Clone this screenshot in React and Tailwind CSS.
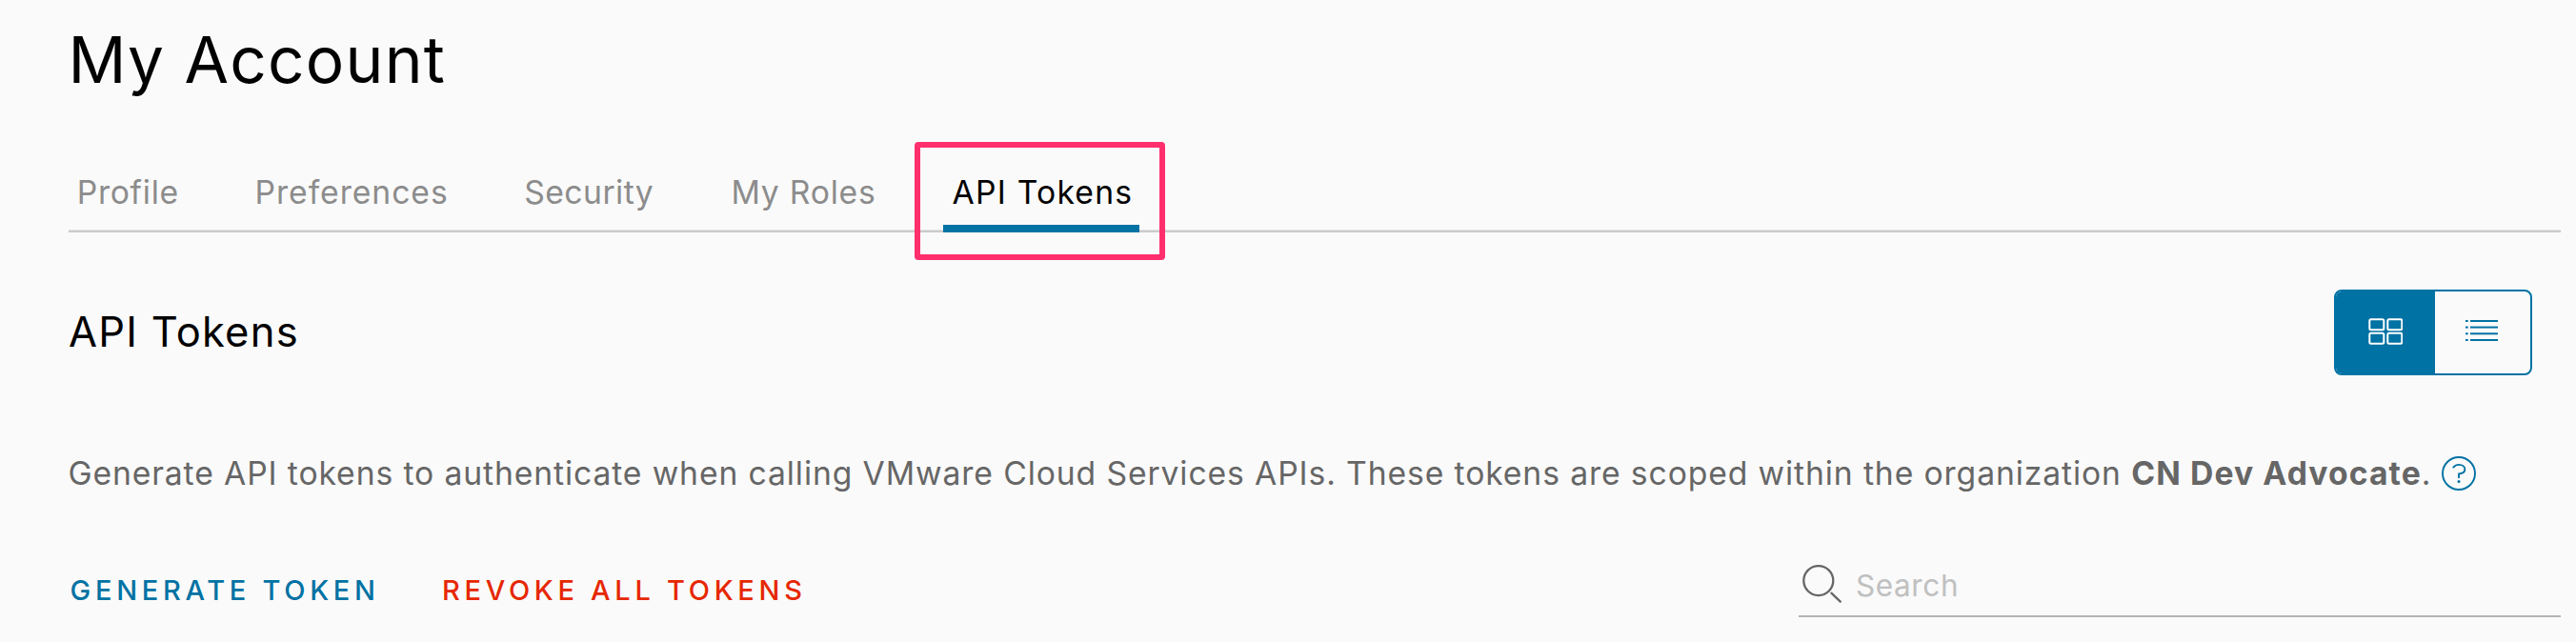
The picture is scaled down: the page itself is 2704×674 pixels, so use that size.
const TABS = [
  { label: "Profile", slot: "w-[187px]", text: "pl-[8.7px] tracking-[0.7px]" },
  { label: "Preferences", slot: "w-[282px]", text: "pl-[8.5px] tracking-[0.95px]" },
  { label: "Security", slot: "w-[218px]", text: "pl-[9.2px] tracking-[0.45px]" },
  { label: "My Roles", slot: "w-[231px]", text: "pl-[8.5px] tracking-[0.75px]" },
];

function GridIcon() {
  return (
    <svg width="36" height="28" viewBox="0 0 36 28" fill="none" stroke="#fff" strokeWidth="2">
      <rect x="1.3" y="1.3" width="15" height="11" rx="1.5" />
      <rect x="20.3" y="1.3" width="15" height="11" rx="1.5" />
      <rect x="1.3" y="15.7" width="15" height="11" rx="1.5" />
      <rect x="20.3" y="15.7" width="15" height="11" rx="1.5" />
    </svg>
  );
}

function ListIcon() {
  return (
    <svg width="34" height="24" viewBox="0 0 34 24" fill="#0072a3">
      <rect x="0" y="1" width="2.7" height="2" />
      <rect x="5" y="1" width="29" height="2" />
      <rect x="0" y="7.6" width="2.7" height="2" />
      <rect x="5" y="7.6" width="29" height="2" />
      <rect x="0" y="14.3" width="2.7" height="2" />
      <rect x="5" y="14.3" width="29" height="2" />
      <rect x="0" y="21" width="2.7" height="2" />
      <rect x="5" y="21" width="29" height="2" />
    </svg>
  );
}

function HelpIcon() {
  return (
    <svg width="36" height="36" viewBox="0 0 36 36" fill="none" stroke="#0072a3" strokeWidth="1.9">
      <circle cx="18" cy="18" r="17" />
      <path d="M12.3 11.6C13.7 9.9 15.8 8.9 18 8.9c3.8 0 6.4 2 6.4 4.9 0 2.9-2.2 4.3-6.4 4.7v3.7" strokeLinecap="round" strokeLinejoin="round" />
      <circle cx="18" cy="26.4" r="1.5" fill="#0072a3" stroke="none" />
    </svg>
  );
}

function SearchIcon() {
  return (
    <svg width="42" height="42" viewBox="0 0 42 42" fill="none" stroke="#666" strokeWidth="2.3">
      <circle cx="16.8" cy="16.6" r="15.5" />
      <path d="M30.4 29.6l9.4 9" strokeLinecap="round" />
    </svg>
  );
}

export default function App() {
  return (
    <main className="flex h-[674px] w-[2704px] flex-col overflow-hidden bg-[#fafafa] pt-[23px] pr-4 pl-[72px] font-['Inter','Liberation_Sans',sans-serif] text-black">
      <h1 className="h-20 -ml-[0.6px] text-[67.5px] leading-[80px] font-normal tracking-[1.25px] whitespace-nowrap">My Account</h1>

      <nav className="mt-[77px] flex h-16 border-b-2 border-[#cbcbcb] text-[33.7px] leading-[44px] font-normal whitespace-nowrap text-[#8c8c8c] shadow-[inset_0_-1px_0_#e3e3e3]">
        {TABS.map((t) => (
          <a key={t.label} className={`${t.slot} ${t.text}`}>{t.label}</a>
        ))}
        <a className="relative -mb-[2px] h-16 w-[206px] border-b-8 border-[#0072a3] pl-[9.5px] tracking-[1.22px] text-black">
          API Tokens
          <span className="absolute -top-[31px] -left-[30px] h-[124px] w-[263px] rounded-[4px] border-6 border-[#ff2f6e]" />
        </a>
      </nav>

      <section className="mt-[60px] flex h-[90px] items-center justify-between pr-[30px]">
        <h2 className="pb-[2px] text-[43.5px] leading-[56px] font-normal tracking-[1.25px]">API Tokens</h2>
        <div className="flex h-[90px] w-[208px] overflow-hidden rounded-[8px] border-2 border-[#0072a3]">
          <button className="flex w-[104px] items-center justify-center bg-[#0072a3] pr-px pb-[3px] pl-[1px]"><GridIcon /></button>
          <button className="flex w-[100px] items-center pb-[4px] pl-8"><ListIcon /></button>
        </div>
      </section>

      <section className="mt-[81px] flex h-11 items-center text-[33.7px] leading-[44px] whitespace-nowrap text-[#666]">
        <p className="w-[2492px] -ml-[0.6px] font-normal tracking-[0.88px]">
          Generate API tokens to authenticate when calling VMware Cloud Services APIs. These tokens are scoped within the organization{" "}
          <strong className="font-bold tracking-[1.07px]">CN Dev Advocate</strong>.
        </p>
        <HelpIcon />
      </section>

      <section className="mt-[61px] flex h-[68px] items-start justify-between whitespace-nowrap">
        <div className="flex pt-5 text-[29px] leading-[40px] font-medium">
          <button className="w-[392px] pl-[1.6px] text-left tracking-[4.7px] text-[#0072a3]">GENERATE TOKEN</button>
          <button className="text-left tracking-[4.7px] text-[#e62700]">REVOKE ALL TOKENS</button>
        </div>
        <label className="flex h-[68px] w-[800px] border-b-2 border-[#b3b3b3] pt-[13px] pl-1">
          <SearchIcon />
          <span className="pl-[14px] text-[31.5px] leading-[44px] font-normal tracking-[0.6px] text-[#c0c0c0]">Search</span>
        </label>
      </section>
    </main>
  );
}
